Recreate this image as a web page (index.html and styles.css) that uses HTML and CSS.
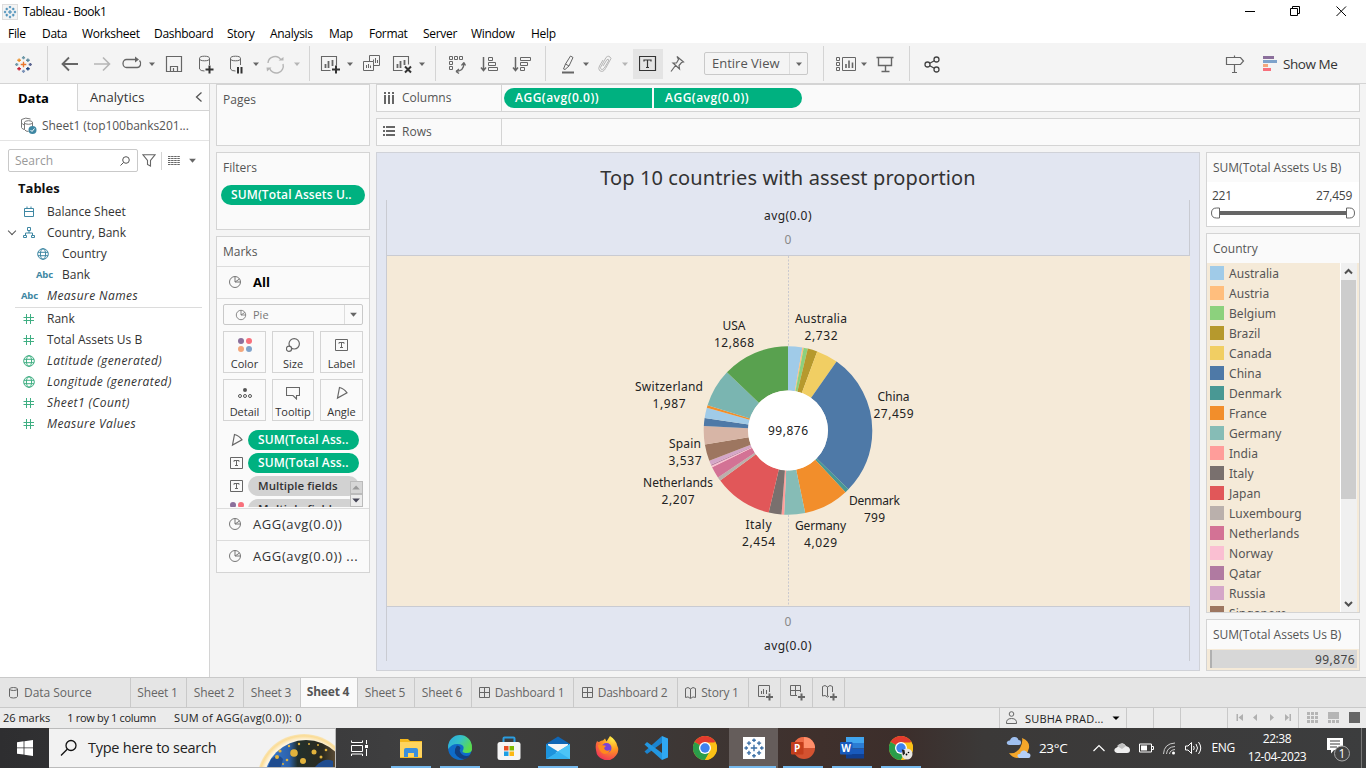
FILE: index.html
```html
<!DOCTYPE html>
<html lang="en">
<head>
<meta charset="utf-8">
<title>Tableau - Book1</title>
<link rel="stylesheet" href="styles.css">
</head>
<body>
<svg class="defs" width="0" height="0">
  <symbol id="globe" viewBox="0 0 12 12"><g fill="none" stroke="currentColor"><circle cx="6" cy="6" r="5.3"/><ellipse cx="6" cy="6" rx="2.6" ry="5.3"/><path d="M1 4.3h10M1 7.7h10"/></g></symbol>
  <symbol id="hash" viewBox="0 0 12 12"><path d="M3.500 1v10M7.500 1v10M.5 4.500h10.500M.5 7.500h10.500" fill="none" stroke="currentColor"/></symbol>
  <symbol id="pie" viewBox="0 0 14 14"><g fill="none" stroke="currentColor"><circle cx="7" cy="7" r="5.5"/><path d="M7 1.5v5.5l4.500-3M7 7h5.400"/></g></symbol>
  <symbol id="tbox" viewBox="0 0 14 14"><path d="M.5 1.500h12v11H.5zM4 5.800V4.500h5v1.300M6.500 4.500v5M5 9.500h3" fill="none" stroke="currentColor"/></symbol>
  <symbol id="angle" viewBox="0 0 14 14"><path d="M4.500 1.500L2.500 12l9.500-5.200Q9 2.500 4.500 1.500z" fill="none" stroke="currentColor" stroke-width="1.200"/></symbol>
  <symbol id="dots" viewBox="0 0 14 14"><circle cx="3" cy="3" r="3" fill="#8b6f9b"/><circle cx="11" cy="3" r="3" fill="#f8707c"/><circle cx="3" cy="11" r="3" fill="#f3a77c"/><circle cx="11" cy="11" r="3" fill="#7fa3cb"/></symbol>
  <symbol id="caret" viewBox="0 0 8 8"><path d="M1 2.500h6L4 6z" fill="currentColor"/></symbol>
  <symbol id="grid" viewBox="0 0 12 12"><path d="M.5.5h10v10H.5zM5.500.5v10M.5 5.500h10" fill="none" stroke="currentColor"/></symbol>
  <symbol id="book" viewBox="0 0 12 12"><path d="M.5 1.500l2.500-1 2.500 1.500L8 .5l2.500 1v9l-2.500-.6-2.500 1.600-2.500-1.600-2.500.6zM5.500 2v9" fill="none" stroke="currentColor"/></symbol>
  <symbol id="crosses" viewBox="0 0 24 24"><path d="M12 8.500v7M8.500 12h7"/><path class="c1" d="M12 1.500v4M10 3.500h4"/><path class="c2" d="M12 18.500v4M10 20.500h4"/><path class="c3" d="M1.500 12h4M3.500 10v4"/><path class="c4" d="M18.500 12h4M20.500 10v4"/><path class="c5" d="M6.500 4.500V9M4.200 6.700h4.600"/><path class="c6" d="M17.500 4.500V9M15.200 6.700h4.600"/><path class="c7" d="M6.500 15v4.500M4.200 17.300h4.600"/><path class="c8" d="M17.500 15v4.500M15.200 17.300h4.600"/></symbol>
  <symbol id="chrome" viewBox="0 0 24 24"><circle cx="12" cy="12" r="12" fill="#fbc116"/><path d="M12 12L1.600 6A12 12 0 0 1 22.400 6z" fill="#e33b2e"/><path d="M12 12L1.600 6A12 12 0 0 0 12 24l5.200-9z" fill="#2a9d4a"/><path d="M12 6.500h10.700A12 12 0 0 1 12 24l5-9z" fill="#fbc116"/><circle cx="12" cy="12" r="6" fill="#fff"/><circle cx="12" cy="12" r="4.700" fill="#3f82ee"/></symbol>
</svg>

<header class="titlebar">
  <svg class="app-logo" width="16" height="16" viewBox="0 0 24 24"><use href="#crosses"/></svg>
  <span class="app-title">Tableau - Book1</span>
  <svg class="win-btns" width="110" height="20" viewBox="0 0 110 20" fill="none" stroke="#000"><path d="M5 9.500h10"/><path d="M50.500 6.500h7v7h-7zM52.500 6V4.500h7v7H58"/><path d="M96.500 4.500l9.500 9.500M106 4.500L96.500 14"/></svg>
</header>
<nav class="menubar"><span>File</span><span>Data</span><span>Worksheet</span><span>Dashboard</span><span>Story</span><span>Analysis</span><span>Map</span><span>Format</span><span>Server</span><span>Window</span><span>Help</span></nav>

<div class="toolbar">
  <svg class="ic brand" viewBox="0 0 24 24"><g transform="translate(2.900 2.900) scale(.8)"><use href="#crosses" width="24" height="24"/></g></svg>
  <i class="sep"></i>
  <svg class="ic" viewBox="0 0 24 24"><path d="M20 12H5M11 5.500L4.500 12l6.500 6.500" stroke-width="1.800"/></svg>
  <svg class="ic off" viewBox="0 0 24 24"><path d="M4 12h15M13 5.500l6.500 6.500-6.500 6.500" stroke-width="1.600"/></svg>
  <svg class="ic" viewBox="0 0 24 24"><path d="M13 7.500H6.500a3.500 4 0 0 0 0 8H17a3.500 4 0 0 0 2.500-7M10 7.500h6" stroke-width="1.300"/><path d="M15 4.500v6l4-3z" fill="#666" stroke="none"/></svg>
  <svg class="caret"><use href="#caret"/></svg>
  <svg class="ic" viewBox="0 0 24 24"><path d="M4.500 4.500h15v15h-15zM8.500 19v-4.500h7V19M11.500 16v3" stroke-width="1.200"/></svg>
  <svg class="ic" viewBox="0 0 24 24"><path d="M5.500 6.500v10.500q1 2 5 2M15.500 6.500V13"/><ellipse cx="10.500" cy="6.500" rx="5" ry="2.300"/><path d="M15.500 13.500v8M11.500 17.500h8" stroke="#333" stroke-width="2"/></svg>
  <svg class="ic" viewBox="0 0 24 24"><path d="M6.500 6.500v10.500q1 2 5 2M16.500 6.500V13"/><ellipse cx="11.500" cy="6.500" rx="5" ry="2.300"/><path d="M14 15v6.500M17.500 15v6.500" stroke="#333" stroke-width="2"/></svg>
  <svg class="caret"><use href="#caret"/></svg>
  <svg class="ic off" viewBox="0 0 24 24"><path d="M5 11a7 7 0 0 1 13-3M20 12a7 7 0 0 1-13.500 4" stroke-width="1.400"/><path d="M15.500 8.500h5V5zM3.500 15.500h5L4 19.500z" fill="#b5b5b5" stroke="none"/></svg>
  <svg class="caret off"><use href="#caret"/></svg>
  <i class="sep"></i>
  <svg class="ic" viewBox="0 0 24 24"><path d="M12.500 18.500h-9v-14h15v9" stroke-width="1.100"/><path d="M7.500 12v4M10.500 9v7M14.500 8v6" stroke-width="1.800"/><path d="M18 13.500v8M14 17.500h8" stroke="#333" stroke-width="2"/></svg>
  <svg class="caret"><use href="#caret"/></svg>
  <svg class="ic" viewBox="0 0 24 24"><path d="M10.500 9.500V3.500h10v10h-6M4.500 9.500h10v9h-10zM7.500 13v3M9.500 12v4M11.500 13.500V16M14.500 7.500v2M16.500 6v5M18.500 8v3"/></svg>
  <svg class="ic" viewBox="0 0 24 24"><path d="M11.500 18.500h-9v-14h15v8" stroke-width="1.100"/><path d="M6.500 12v4M9.500 9v7M13.500 8v5" stroke-width="1.800"/><path d="M14 14.500l6 6M20 14.500l-6 6" stroke="#333" stroke-width="2"/></svg>
  <svg class="caret"><use href="#caret"/></svg>
  <i class="sep"></i>
  <svg class="ic" viewBox="0 0 24 24"><path d="M4.500 4.500h3v3h-3zM9.500 4.500h3v3h-3zM14.500 4.500h3v3h-3zM4.500 9.500h3v3h-3zM4.500 14.500h3v3h-3z"/><path d="M19 11q0 8-8 8.500M11 19.500l3-2.500M11 19.500l3 2M19 10.500l-2.500 3M19 10.500l1.500 3" stroke-width="1.300"/></svg>
  <svg class="ic" viewBox="0 0 24 24"><path d="M5.500 5v13M3 15.500l2.500 3 2.500-3" stroke-width="1.500"/><path d="M10.500 5.500h4v3h-4zM10.500 10.500h7v3h-7zM10.500 15.500h9v3h-9z"/></svg>
  <svg class="ic" viewBox="0 0 24 24"><path d="M5.500 5v13M3 15.500l2.500 3 2.500-3" stroke-width="1.500"/><path d="M10.500 5.500h10v3h-10zM10.500 10.500h7v3h-7zM10.500 15.500h4v3h-4z"/></svg>
  <i class="sep"></i>
  <svg class="ic" viewBox="0 0 24 24"><path d="M7.500 17l2-5 5-8 2.500 1.500-4 8.500-4 3.500zM9.500 12l3.500 2"/><path d="M6 20.500h12" stroke-width="2"/></svg>
  <svg class="caret"><use href="#caret"/></svg>
  <svg class="ic off" viewBox="0 0 24 24"><path d="M10 14l4-6.500q2-1 1.500 1.500L11 16.500q-3 2.500-3.500-1L13 5.500q3-3 5 1L12.500 16.500q-2.500 4.500-6 2-1.500-2 0-4.500L10 8"/></svg>
  <svg class="caret off"><use href="#caret"/></svg>
  <span class="t-btn"><svg width="18" height="16" viewBox="0 0 18 16"><path d="M.5.5h16v14H.5zM5 5.500V4h7v1.500M8.500 4v7.500M7 11.500h3" fill="none" stroke="#333" stroke-width="1.200"/></svg></span>
  <svg class="ic" viewBox="0 0 24 24"><path d="M12 4.500l6.500 5.500-2 .5-2.500 3 .5 3.500-6.500-6 3.500 0 2-3.500zM10.500 13.500L6 19.500" stroke-width="1.200"/></svg>
  <div class="fit"><span>Entire View</span><svg class="caret"><use href="#caret"/></svg></div>
  <i class="sep"></i>
  <svg class="ic" viewBox="0 0 24 24"><path d="M2.500 5.500h3v3h-3zM2.500 10.500h3v3h-3zM2.500 15.500h3v3h-3zM8.500 5.500h13v13h-13z"/><path d="M12 12v4M15 8.500V16M18.500 10.500V16" stroke-width="1.600"/></svg>
  <svg class="caret"><use href="#caret"/></svg>
  <svg class="ic" viewBox="0 0 24 24"><path d="M3.500 5.500h17M5.500 5.500v8h13v-8M12.500 13.500v6M8.500 19.500h8" stroke-width="1.400"/></svg>
  <i class="sep"></i>
  <svg class="ic dark" viewBox="0 0 24 24"><circle cx="7.500" cy="12.500" r="2.500"/><circle cx="16.500" cy="7.500" r="2.500"/><circle cx="16.500" cy="17.500" r="2.500"/><path d="M9.800 11.200l4.500-2.500M9.800 13.800l4.500 2.500" /></svg>
  <svg class="ic" viewBox="0 0 24 24"><path d="M3.500 5.500h14l3 3.500-3 3.500h-14zM11.500 3.500v2M11.500 12.500v8M9 20.500h5" stroke-width="1.200"/></svg>
  <div class="showme"><svg width="14" height="15"><path fill="#8b6f9b" d="M0 0h11v3H0z"/><path fill="#7fa3cb" d="M0 4h14v3H0z"/><path fill="#f3a77c" d="M0 8h5v3H0z"/><path fill="#f8707c" d="M0 12h8v3H0z"/></svg><span>Show Me</span></div>
</div>

<main class="work">
  <aside class="data-pane">
    <div class="pane-tabs"><b>Data</b><span>Analytics</span><svg width="8" height="10" viewBox="0 0 8 10"><path d="M6.500.5L1.500 5l5 4.500" fill="none" stroke="#555" stroke-width="1.300"/></svg></div>
    <div class="source"><svg width="18" height="18" viewBox="0 0 18 18" fill="none" stroke="#777"><path d="M1.500 2.500v8q1 2 3 2M1.500 2.500q4-2.500 9-.5M4.500 5.500v7q1 2 4 2M12.500 5.500v4M1.500 6q1 1.500 3 2"/><ellipse cx="8.500" cy="5.500" rx="4" ry="1.800"/><circle cx="12.500" cy="13" r="4" fill="#3e87a3" stroke="none"/><path d="M10.500 13l1.500 1.500 2.500-3" stroke="#fff"/></svg><span>Sheet1 (top100banks201...</span></div>
    <div class="search-row">
      <div class="search"><span>Search</span><svg width="10" height="10" viewBox="0 0 10 10"><circle cx="6" cy="4" r="3.300" fill="none" stroke="#555"/><path d="M3.500 6.500L.5 9.500" stroke="#555"/></svg></div>
      <svg class="funnel" width="14" height="13" viewBox="0 0 14 13"><path d="M.8.700h12.400L8.500 6.500v5.500l-3-1.500v-4z" fill="none" stroke="#666" stroke-width="1.100"/></svg>
      <i></i>
      <svg class="list" width="12" height="10" viewBox="0 0 12 10"><path d="M0 .5h12M0 2.500h12M0 4.500h12M0 6.500h12M0 8.500h12" stroke="#666" stroke-dasharray="2.500 .6"/></svg>
      <svg class="caret"><use href="#caret"/></svg>
    </div>
    <h2>Tables</h2>
    <ul class="fields blue">
      <li><svg class="fi" viewBox="0 0 12 12"><path d="M1.500 2.500h9v8h-9zM1.500 5.500h9M4 .5v2M8 .5v2" fill="none" stroke="currentColor"/></svg><span>Balance Sheet</span></li>
      <li class="open"><svg class="fi" viewBox="0 0 12 12"><path d="M4.500.5h3v3h-3zM6 3.500v2.500M2.500 8V6h7v2M.5 8.500h3v2h-3zM8.500 8.500h3v2h-3z" fill="none" stroke="currentColor"/></svg><span>Country, Bank</span></li>
      <li class="sub"><svg class="fi"><use href="#globe"/></svg><span>Country</span></li>
      <li class="sub"><em>Abc</em><span>Bank</span></li>
      <li class="gen"><em>Abc</em><span>Measure Names</span></li>
    </ul>
    <ul class="fields green">
      <li><svg class="fi"><use href="#hash"/></svg><span>Rank</span></li>
      <li><svg class="fi"><use href="#hash"/></svg><span>Total Assets Us B</span></li>
      <li class="gen"><svg class="fi"><use href="#globe"/></svg><span>Latitude (generated)</span></li>
      <li class="gen"><svg class="fi"><use href="#globe"/></svg><span>Longitude (generated)</span></li>
      <li class="gen"><svg class="fi"><use href="#hash"/></svg><span>Sheet1 (Count)</span></li>
      <li class="gen"><svg class="fi"><use href="#hash"/></svg><span>Measure Values</span></li>
    </ul>
  </aside>

  <section class="cards">
    <div class="card pages"><h3>Pages</h3></div>
    <div class="card filters"><h3>Filters</h3><span class="pill">SUM(Total Assets U..</span></div>
    <div class="card marks">
      <h3>Marks</h3>
      <div class="mark-row all"><svg width="14" height="14"><use href="#pie"/></svg><b>All</b></div>
      <div class="mark-body">
        <div class="mark-type"><svg width="12" height="12"><use href="#pie"/></svg><span>Pie</span><svg class="caret"><use href="#caret"/></svg></div>
        <div class="btns">
          <div><svg width="14" height="14"><use href="#dots"/></svg>Color</div>
          <div><svg width="14" height="14" viewBox="0 0 14 14"><g fill="none" stroke="#666" stroke-width="1.200"><circle cx="8.200" cy="5.800" r="5.200"/><circle cx="3" cy="10.800" r="2.600" fill="#fafafa"/></g></svg>Size</div>
          <div><svg width="14" height="14"><use href="#tbox"/></svg>Label</div>
          <div><svg width="14" height="14" viewBox="0 0 14 14"><circle cx="7" cy="4" r="2" fill="#555"/><g fill="none" stroke="#555"><circle cx="2" cy="10" r="1.500"/><circle cx="7" cy="10" r="1.500"/><circle cx="12" cy="10" r="1.500"/></g></svg>Detail</div>
          <div><svg width="14" height="14" viewBox="0 0 14 14"><path d="M.5 1.500h13v8h-3v3.500L7 9.500H.5z" fill="none" stroke="#666" stroke-width="1.100"/></svg>Tooltip</div>
          <div><svg width="14" height="14"><use href="#angle"/></svg>Angle</div>
        </div>
        <div class="shelf">
          <div><svg width="14" height="14"><use href="#angle"/></svg><span class="pill">SUM(Total Ass..</span></div>
          <div><svg width="14" height="14"><use href="#tbox"/></svg><span class="pill">SUM(Total Ass..</span></div>
          <div><svg width="14" height="14"><use href="#tbox"/></svg><span class="pill gray">Multiple fields</span></div>
          <div><svg width="14" height="14"><use href="#dots"/></svg><span class="pill gray">Multiple fields</span></div>
          <div class="spin"><svg width="13" height="13" viewBox="0 0 13 13"><path d="M1.500 9h9L6 4z" fill="#999"/></svg><svg width="13" height="13" viewBox="0 0 13 13"><path d="M1.500 4h9L6 9z" fill="#445"/></svg></div>
        </div>
      </div>
      <div class="mark-row"><svg width="14" height="14"><use href="#pie"/></svg><span>AGG(avg(0.0))</span></div>
      <div class="mark-row"><svg width="14" height="14"><use href="#pie"/></svg><span>AGG(avg(0.0)) ...</span></div>
    </div>
  </section>

  <section class="center">
    <div class="shelf-row"><div class="shelf-name"><svg width="12" height="12" viewBox="0 0 12 12"><path d="M2 0v2M6 0v2M10 0v2M2 3v9M6 3v9M10 3v9" stroke="#666" stroke-width="2"/></svg><span>Columns</span></div><span class="pill left">AGG(avg(0.0))</span><span class="pill right">AGG(avg(0.0))</span></div>
    <div class="shelf-row"><div class="shelf-name"><svg width="12" height="12" viewBox="0 0 12 12"><path d="M0 1h2M0 5h2M0 9h2M3 1h9M3 5h9M3 9h9" stroke="#666" stroke-width="2"/></svg><span>Rows</span></div></div>
    <div class="lower">
      <div class="viz">
        <h1>Top 10 countries with assest proportion</h1>
        <div class="plot">
          <div class="axis top"><b>avg(0.0)</b><span>0</span></div>
          <svg class="chart" width="803" height="350" viewBox="387 256 803 350">
            <path d="M788.500 256v350" stroke="#c9c9cf" stroke-dasharray="2 1.500"/>
            <g fill="none" stroke-width="44.400" transform="rotate(-90 788 430.500)">
              <circle class="slice" pathLength="360" stroke="#a0cbe8" stroke-dasharray="9.850 360"/>
              <circle class="slice" pathLength="360" stroke="#ffbe7d" stroke-dasharray="0.900 360" stroke-dashoffset="-9.850"/>
              <circle class="slice" pathLength="360" stroke="#8cd17d" stroke-dasharray="2.900 360" stroke-dashoffset="-10.750"/>
              <circle class="slice" pathLength="360" stroke="#b6992d" stroke-dasharray="6.650 360" stroke-dashoffset="-13.650"/>
              <circle class="slice" pathLength="360" stroke="#f1ce63" stroke-dasharray="14.900 360" stroke-dashoffset="-20.300"/>
              <circle class="slice" pathLength="360" stroke="#4e79a7" stroke-dasharray="99 360" stroke-dashoffset="-35.200"/>
              <circle class="slice" pathLength="360" stroke="#499894" stroke-dasharray="2.800 360" stroke-dashoffset="-134.200"/>
              <circle class="slice" pathLength="360" stroke="#f28e2b" stroke-dasharray="31.200 360" stroke-dashoffset="-137"/>
              <circle class="slice" pathLength="360" stroke="#86bcb6" stroke-dasharray="14.500 360" stroke-dashoffset="-168.200"/>
              <circle class="slice" pathLength="360" stroke="#ff9d9a" stroke-dasharray="1.800 360" stroke-dashoffset="-182.700"/>
              <circle class="slice" pathLength="360" stroke="#79706e" stroke-dasharray="8.800 360" stroke-dashoffset="-184.500"/>
              <circle class="slice" pathLength="360" stroke="#e15759" stroke-dasharray="40.200 360" stroke-dashoffset="-193.300"/>
              <circle class="slice" pathLength="360" stroke="#bab0ac" stroke-dasharray="2.700 360" stroke-dashoffset="-233.500"/>
              <circle class="slice" pathLength="360" stroke="#d37295" stroke-dasharray="7.950 360" stroke-dashoffset="-236.200"/>
              <circle class="slice" pathLength="360" stroke="#fabfd2" stroke-dasharray="1.100 360" stroke-dashoffset="-244.150"/>
              <circle class="slice" pathLength="360" stroke="#b07aa1" stroke-dasharray="0.800 360" stroke-dashoffset="-245.250"/>
              <circle class="slice" pathLength="360" stroke="#d4a6c8" stroke-dasharray="2.950 360" stroke-dashoffset="-246.050"/>
              <circle class="slice" pathLength="360" stroke="#9d7660" stroke-dasharray="11.400 360" stroke-dashoffset="-249"/>
              <circle class="slice" pathLength="360" stroke="#d7b5a6" stroke-dasharray="12.750 360" stroke-dashoffset="-260.400"/>
              <circle class="slice" pathLength="360" stroke="#4e79a7" stroke-dasharray="5.500 360" stroke-dashoffset="-273.150"/>
              <circle class="slice" pathLength="360" stroke="#a0cbe8" stroke-dasharray="7.100 360" stroke-dashoffset="-278.650"/>
              <circle class="slice" pathLength="360" stroke="#f28e2b" stroke-dasharray="1.700 360" stroke-dashoffset="-285.750"/>
              <circle class="slice" pathLength="360" stroke="#7ab5b1" stroke-dasharray="26.150 360" stroke-dashoffset="-287.450"/>
              <circle class="slice" pathLength="360" stroke="#59a14f" stroke-dasharray="46.400 360" stroke-dashoffset="-313.600"/>
            </g>
            <circle cx="788" cy="430.500" r="40" fill="#fff"/>
            <g class="labels">
              <text x="788" y="435" textLength="40">99,876</text>
              <text x="821" y="323" textLength="52">Australia</text><text x="821" y="340" textLength="33">2,732</text>
              <text x="734" y="330" textLength="23">USA</text><text x="734" y="347" textLength="40">12,868</text>
              <text x="669" y="391" textLength="68">Switzerland</text><text x="669" y="408" textLength="33">1,987</text>
              <text x="685" y="448" textLength="32">Spain</text><text x="685" y="465" textLength="33">3,537</text>
              <text x="678" y="487" textLength="70">Netherlands</text><text x="678" y="504" textLength="33">2,207</text>
              <text x="758.500" y="529" textLength="26">Italy</text><text x="758.500" y="546" textLength="33">2,454</text>
              <text x="820.500" y="530" textLength="51">Germany</text><text x="820.500" y="547" textLength="33">4,029</text>
              <text x="874.500" y="505" textLength="51">Denmark</text><text x="874.500" y="522" textLength="21">799</text>
              <text x="893.500" y="401" textLength="32">China</text><text x="893.500" y="418" textLength="40">27,459</text>
            </g>
          </svg>
          <div class="axis bottom"><span>0</span><b>avg(0.0)</b></div>
        </div>
      </div>
      <aside class="legends">
        <div class="card range"><h3>SUM(Total Assets Us B)</h3><div class="ends"><span>221</span><span>27,459</span></div>
          <svg width="146" height="12" viewBox="0 0 146 12"><path d="M9 6h128" stroke="#666" stroke-width="4"/><path d="M9.500 1v10h-3q-5 0-5-5t5-5zM136.500 1v10h3q5 0 5-5t-5-5z" fill="#fff" stroke="#666"/></svg></div>
        <div class="card country"><h3>Country</h3>
          <div class="country-body">
            <ul>
              <li class="k1">Australia</li><li class="k2">Austria</li><li class="k3">Belgium</li><li class="k4">Brazil</li><li class="k5">Canada</li><li class="k6">China</li><li class="k7">Denmark</li><li class="k8">France</li><li class="k9">Germany</li><li class="k10">India</li><li class="k11">Italy</li><li class="k12">Japan</li><li class="k13">Luxembourg</li><li class="k14">Netherlands</li><li class="k15">Norway</li><li class="k16">Qatar</li><li class="k17">Russia</li><li class="k18">Singapore</li>
            </ul>
            <div class="scroll"><svg width="15" height="17" viewBox="0 0 15 17"><path d="M4 10.500L7.500 7l3.500 3.500" fill="none" stroke="#505050" stroke-width="2"/></svg><i></i><svg width="15" height="17" viewBox="0 0 15 17"><path d="M4 7l3.500 3.500L11 7" fill="none" stroke="#505050" stroke-width="2"/></svg></div>
          </div>
        </div>
        <div class="card total"><h3>SUM(Total Assets Us B)</h3><div class="total-body"><span>99,876</span></div></div>
      </aside>
    </div>
  </section>
</main>

<nav class="sheets">
  <span class="ds"><svg width="10" height="12" viewBox="0 0 10 12"><path d="M.5 2v7.500q.5 1.500 4 1.500t4-1.500V2" fill="none" stroke="#666"/><ellipse cx="4.500" cy="2" rx="4" ry="1.500" fill="none" stroke="#666"/></svg>Data Source</span>
  <span>Sheet 1</span><span>Sheet 2</span><span>Sheet 3</span><span class="on">Sheet 4</span><span>Sheet 5</span><span>Sheet 6</span>
  <span><svg width="12" height="12"><use href="#grid"/></svg>Dashboard 1</span>
  <span><svg width="12" height="12"><use href="#grid"/></svg>Dashboard 2</span>
  <span><svg width="12" height="12"><use href="#book"/></svg>Story 1</span>
  <span class="add"><svg viewBox="0 0 16 16"><path d="M7 11.500H.5V.5h11V7M3.500 6v3M5.500 4v5M8.500 5v4"/><path d="M11.500 8.500v7M8 12h7" stroke-width="2"/></svg></span>
  <span class="add"><svg viewBox="0 0 16 16"><path d="M7 10.500H.5V.5h10V7M5.500.5v10M.5 5.500h10"/><path d="M11.500 8.500v7M8 12h7" stroke-width="2"/></svg></span>
  <span class="add"><svg viewBox="0 0 16 16"><path d="M7 11L5.500 12 3 10.500l-2.500.5V1.500l2.500-1L5.500 2 8 .5l2.500 1V7M5.500 2v9"/><path d="M11.500 8.500v7M8 12h7" stroke-width="2"/></svg></span>
</nav>
<footer class="status">
  <span>26 marks</span><span class="rows">1 row by 1 column</span><span class="sum">SUM of AGG(avg(0.0)): 0</span>
  <div class="user"><svg width="11" height="14" viewBox="0 0 11 14"><circle cx="5.500" cy="3" r="2.300" fill="none" stroke="#666"/><path d="M.5 12.500q-.5-5 5-5t5 5z" fill="none" stroke="#666"/></svg><span>SUBHA PRAD...</span><svg class="caret" viewBox="0 0 8 8"><path d="M.5 2.500h7L4 6z" fill="#000"/></svg></div>
  <i></i><i></i><i></i>
  <div class="pager"><svg width="60" height="8" viewBox="0 0 60 8" fill="#b0b0b0"><path d="M.5 0H2v7H.5zM7 0v7L2.500 3.500zM21 0v7l-4-3.500zM34 0v7l4-3.500zM49 0v7l4-3.500zM53.500 0H55v7h-1.500z"/></svg></div>
  <div class="views"><svg width="54" height="11" viewBox="0 0 54 11"><path fill="#b5b5b5" d="M0 0h3v3H0zM4 0h3v3H4zM8 0h3v3H8zM0 4h3v3H0zM4 4h3v3H4zM8 4h3v3H8zM0 8h3v3H0zM4 8h3v3H4zM8 8h3v3H8zM21 0h11v7H21zM21 8h3v3h-3zM25 8h3v3h-3zM29 8h3v3h-3z"/><path fill="#666" d="M42 0h11v11H42z"/></svg></div>
</footer>

<footer class="taskbar">
  <div class="tb start"><svg width="16" height="16" viewBox="0 0 16 16"><path fill="#fff" d="M0 2.200l6.600-.9v6.200H0zM7.400 1.200L16 0v7.500H7.400zM0 8.300h6.600v6.300L0 13.700zM7.400 8.300H16V16l-8.600-1.200z"/></svg></div>
  <div class="tsearch"><svg class="mag" width="18" height="18" viewBox="0 0 18 18"><circle cx="11" cy="6.500" r="5" fill="none" stroke="#111" stroke-width="1.300"/><path d="M7.200 10.200L1 16.500" stroke="#111" stroke-width="1.300"/></svg><span>Type here to search</span>
    <svg class="earth" width="76" height="38" viewBox="0 0 76 38"><defs><radialGradient id="halo" cx="45" cy="52" r="47" gradientUnits="userSpaceOnUse"><stop offset=".88" stop-color="#fdf3dc"/><stop offset=".96" stop-color="#fbdc95"/><stop offset="1" stop-color="#f8e5b8"/></radialGradient><linearGradient id="sea" x1="0" y1="0" x2="1" y2="0"><stop offset="0" stop-color="#3a80d8"/><stop offset=".3" stop-color="#2c62ac"/><stop offset=".4" stop-color="#22302c"/><stop offset=".7" stop-color="#2c2b20"/><stop offset="1" stop-color="#8a6b48"/></linearGradient></defs><circle cx="45" cy="52" r="47" fill="url(#halo)"/><circle cx="47" cy="53" r="42" fill="url(#sea)"/><path d="M58 36q8-8 16-4v6H56zM12 30q8-6 12 0l-2 8H9z" fill="#1f4c8f"/><g fill="#e2b33c"><circle cx="35" cy="24" r="3.800"/><circle cx="44" cy="32" r="3"/><circle cx="55" cy="23" r="2.500"/><circle cx="21" cy="22" r="1.600"/><circle cx="18" cy="28" r="2"/><circle cx="62" cy="28" r="1.500"/><circle cx="28" cy="31" r="1.300"/><circle cx="40" cy="15" r="1.200"/><circle cx="50" cy="15" r="1"/><circle cx="30" cy="17" r="1.200"/><circle cx="67" cy="21" r="1.300"/><circle cx="24" cy="35" r="1"/><circle cx="59" cy="16" r="1"/></g></svg></div>
  <div class="tb view"><svg width="18" height="16" viewBox="0 0 18 16" fill="none" stroke="#fff"><path d="M1.500.5v2h11v-2M1.500 5.500h11v6h-11zM1.500 16v-2h11v2M16.500 0v4M16.500 9v7"/><path d="M15 6.500h3" stroke-width="3"/></svg></div>
  <div class="tb run"><svg width="24" height="24" viewBox="0 0 24 24"><path d="M1 3h8l2 2h12v17H1z" fill="#f5b81c"/><path d="M1 6h22v15H1z" fill="#ffd45e"/><path d="M5 21v-7q0-2 2-2h10q2 0 2 2v7h-4v-4H9v4z" fill="#3a8edb"/></svg></div>
  <div class="tb run"><svg width="26" height="26" viewBox="0 0 24 24"><defs><linearGradient id="eg" x1="0" y1="0" x2="1" y2=".5"><stop offset="0" stop-color="#2aa7e0"/><stop offset=".5" stop-color="#35c1c9"/><stop offset="1" stop-color="#5bdc4b"/></linearGradient></defs><circle cx="12" cy="12" r="11" fill="#0f6cc9"/><path d="M1 11A11 11 0 0 1 23 11q1 6-6 5.500-4-.5-2-3 1.500-4-3-5Q5 7 1 13z" fill="url(#eg)"/><path d="M9 10q-5 7 3 11.500 6 2 9.500-3-5 2-8-1-3-3-1-5.500-1-2.500-3.500-2z" fill="#123f80"/></svg></div>
  <div class="tb"><svg width="24" height="24" viewBox="0 0 24 24"><path d="M6.500 7V2.500q0-1 1-1h9q1 0 1 1V7" fill="none" stroke="#2b9de0" stroke-width="2"/><rect x=".5" y="6" width="23" height="18" rx="2.500" fill="#f5f5f5"/><path fill="#e74f25" d="M7 10h4.500v4.500H7z"/><path fill="#7eb800" d="M12.500 10H17v4.500h-4.500z"/><path fill="#1d9fe4" d="M7 15.500h4.500V20H7z"/><path fill="#fcb813" d="M12.500 15.500H17V20h-4.500z"/></svg></div>
  <div class="tb run"><svg width="24" height="24" viewBox="0 0 24 24"><path d="M0 8l12-7.500L24 8v15H0z" fill="#1066b5"/><path d="M2 8h20v9H2z" fill="#f6f6f6"/><path d="M0 8l12 7.500L0 23z" fill="#1d93dc"/><path d="M24 8v15H0l12-7.500z" fill="#35b2f0"/><path d="M24 8v15L12 15.500z" fill="#4cc4f7"/></svg></div>
  <div class="tb"><svg width="24" height="24" viewBox="0 0 24 24"><defs><radialGradient id="ff" cx=".75" cy=".1" r="1"><stop offset="0" stop-color="#fff04a"/><stop offset=".45" stop-color="#ff9a1f"/><stop offset="1" stop-color="#f0305a"/></radialGradient></defs><path d="M2 5q1 1 2 1 2-2 4-1.500l2-2 1.500 3 3.500-5.500q6 4 7 9 3 6-1 10.500A11 11 0 0 1 1 14Q0 9 2 5z" fill="url(#ff)"/><circle cx="11.500" cy="12" r="5" fill="#7a42d6"/><path d="M3 9q6 0 8 1l-2 2q1 4 6 2-2 5-7 3.500-4-2-5-8.500z" fill="#ff8a1c"/></svg></div>
  <div class="tb"><svg width="24" height="24" viewBox="0 0 24 24"><path d="M18 0v7L3 18 .5 15.500z" fill="#1b84cf"/><path d="M18 24v-7L3 6 .5 8.500z" fill="#2397e0"/><path d="M18 0l6 2.500v19L18 24z" fill="#2fa8f2"/></svg></div>
  <div class="tb"><svg width="24" height="24"><use href="#chrome"/></svg></div>
  <div class="tb run active"><svg class="tab-ic" width="22" height="22" viewBox="0 0 24 24"><use href="#crosses"/></svg></div>
  <div class="tb run"><svg width="24" height="24" viewBox="0 0 24 24"><circle cx="13" cy="12" r="11" fill="#d35230"/><path d="M13 1a11 11 0 0 1 11 11H13z" fill="#ff8f6b"/><path d="M2 12A11 11 0 0 1 13 1v11z" fill="#ed6c47"/><rect y="6" width="12.500" height="12.500" rx="1" fill="#c43e1c"/><text x="6.200" y="16" class="glyph">P</text></svg></div>
  <div class="tb run"><svg width="24" height="24" viewBox="0 0 24 24"><path fill="#41a5ee" d="M6 1h18v6H6z"/><path fill="#2b7cd3" d="M6 7h18v5.500H6z"/><path fill="#185abd" d="M6 12.500h18V18H6z"/><path fill="#103f91" d="M6 18h18v4.500H6z"/><rect y="6" width="12.500" height="12.500" rx="1" fill="#185abd"/><text x="6.200" y="16" class="glyph">W</text></svg></div>
  <div class="tb run"><svg width="24" height="24" viewBox="0 0 24 24"><use href="#chrome"/><circle cx="18" cy="18" r="5.500" fill="#e8e5e0"/><path d="M12.800 13.500l2.700.5.500 3.500-2 2z" fill="#1c1c1c"/><circle cx="19.500" cy="16.500" r=".8"/><circle cx="17.500" cy="18.500" r=".9"/></svg></div>
  <div class="tray">
    <svg width="26" height="24" viewBox="0 0 26 24"><path d="M16 2q8 3 7 10-2 10-12 10-5-.5-8-5 7 1 11-5 3-5 2-10z" fill="#f4a62a"/><path d="M3 9q-3-1-2-3 1-2 3-1.500Q5 .5 9 1q3 .5 3.500 3 3 0 2.500 3 0 2-2 2z" fill="#9fbfee"/><path d="M13 22q-2-1-1.500-3 1-1.500 2.500-1 1-4 4.500-3.500 2.500.5 3 2.500 3 0 3 2.500 0 2.500-2 2.500z" fill="#b4cff8"/></svg>
    <span class="temp">23°C</span>
    <svg width="12" height="8" viewBox="0 0 12 8"><path d="M.5 7L6 1.500 11.500 7" fill="none" stroke="#fff" stroke-width="1.200"/></svg>
    <svg width="16" height="12" viewBox="0 0 16 12"><path d="M3 11q-4-1-2-4.500Q4 5 5 3q4-4 7 1 4 1 4 4 0 3-3 3z" fill="#eee"/><path d="M3 4q4-5 9 0l-4 3z" fill="#c2c2c2"/></svg>
    <svg width="15" height="10" viewBox="0 0 15 10"><path d="M.5 1h12v8H.5zM13 3.500h1.500v3H13" fill="none" stroke="#fff"/><path d="M2 2.500h6v5H2z" fill="#fff"/></svg>
    <svg width="13" height="13" viewBox="0 0 13 13"><g fill="none" stroke="#ccc"><path d="M.5 12Q1 1.500 12 1M3.500 12Q4 5 12 4.500M6.500 12q.5-4 5.500-4.500"/></g><circle cx="10.500" cy="11" r="1.500" fill="#fff"/></svg>
    <svg width="17" height="14" viewBox="0 0 17 14" fill="none" stroke="#fff"><path d="M.5 5h2.500l3.500-3.500v11L3 9H.5zM8.500 5q1.500 2 0 4M11 3q3 4 0 8M13.500 1q4.500 6 0 12"/></svg>
    <span class="lang">ENG</span>
    <div class="clock"><span>22:38</span><span>12-04-2023</span></div>
    <svg width="26" height="28" viewBox="0 0 26 28"><path d="M1 4h16v12H8l-3 3.500V16H1z" fill="#fff"/><path d="M4 7h10M4 10h10M4 13h7" stroke="#3a3a3b"/><circle cx="16" cy="19.500" r="7.500" fill="#444" stroke="#aaa"/><text x="16" y="24" class="glyph n">1</text></svg>
    <i></i>
  </div>
</footer>
</body>
</html>
```
FILE: styles.css
```css
* { box-sizing: border-box; }
body { margin: 0; width: 1366px; height: 768px; overflow: hidden; background: #f4f4f4; font: 12px/16px "Open Sans", "Noto Sans", sans-serif; color: #333; display: flex; flex-direction: column; }
h1, h2, h3, ul { margin: 0; padding: 0; font-weight: 400; list-style: none; }
svg { flex: none; display: block; }
.defs { position: absolute; }
.caret { width: 8px; height: 8px; color: #666; }
span { white-space: nowrap; }

.titlebar { height: 23px; background: #fff; display: flex; align-items: center; padding-left: 2px; flex: none; }
.app-logo { stroke: #3b86b4; stroke-width: 1.8; background: #f4f4f4; border: 1px solid #ddd; }
.app-title { margin-left: 5px; color: #000; flex: 1; font-size: 12px; letter-spacing: -.43px; }
.win-btns { margin-right: 16px; }
.menubar { height: 20px; flex: none; background: #fff; color: #000; padding-left: 8px; display: grid; grid-template-columns: 34px 40px 72px 73px 43px 59px 40px 54px 48px 60px auto; line-height: 22px; justify-content: start; letter-spacing: -.3px; }

.toolbar { height: 41px; flex: none; padding: 1px 0 0 11px; display: grid; align-items: center; grid-template-columns: 36px 11px 32px 30px 28px 14px 32px 30px 28px 11px 30px 16px 9px 28px 13px 32px 27px 17px 10px 33px 32px 35px 11px 26px 11px 28px 12px 32px 39px 119px 11px 26px 13px 36px 11px 303px 40px 1fr; border-bottom: 1px solid #d4d4d4; }
.ic { width: 24px; height: 24px; fill: none; stroke: #666; }
.ic.off { stroke: #b5b5b5; }
.ic.dark { stroke: #444; stroke-width: 1.3; }
.caret.off { color: #b5b5b5; }
.brand { stroke: #e8762c; stroke-width: 1.7; --c1: #6f99a8; --c2: #7c93b8; --c3: #6f99a8; --c4: #5b6591; --c5: #eb912b; --c6: #5b879b; --c7: #c72035; --c8: #1f447e; }
.c1 { stroke: var(--c1); } .c2 { stroke: var(--c2); } .c3 { stroke: var(--c3); } .c4 { stroke: var(--c4); } .c5 { stroke: var(--c5); } .c6 { stroke: var(--c6); } .c7 { stroke: var(--c7); } .c8 { stroke: var(--c8); }
.sep { width: 1px; height: 35px; background: #d4d4d4; }
.t-btn { width: 30px; height: 30px; background: #e4e4e4; display: grid; place-content: center; }
.fit { width: 104px; height: 23px; border: 1px solid #c9c9c9; border-radius: 2px; display: flex; align-items: center; font-size: 13px; color: #555; }
.fit span { width: 85px; padding-left: 7px; border-right: 1px solid #ddd; line-height: 21px; }
.fit .caret { margin-left: 5px; }
.showme { display: flex; align-items: center; gap: 6px; font-size: 13.5px; letter-spacing: -.45px; }

.work { flex: 1; display: flex; min-height: 0; }
.data-pane { width: 210px; background: #fff; border-right: 1px solid #d4d4d4; }
.pane-tabs { height: 27px; display: flex; align-items: center; color: #333; font-size: 13px; }
.pane-tabs b { width: 77px; padding-left: 18px; color: #000; }
.pane-tabs span { flex: 1; align-self: stretch; line-height: 27px; padding-left: 12px; letter-spacing: .1px; background: #fafafa; border-left: 1px solid #d4d4d4; border-bottom: 1px solid #d4d4d4; }
.pane-tabs svg { margin: 0 6px 2px -14px; }
.source { height: 30px; border-bottom: 1px solid #e4e4e4; display: flex; align-items: center; gap: 4px; padding-left: 20px; color: #555; letter-spacing: -.05px; }
.search-row { display: flex; align-items: center; height: 23px; margin: 8px 0 0 8px; }
.search { width: 130px; height: 23px; border: 1px solid #c9c9c9; border-radius: 2px; display: flex; align-items: center; justify-content: space-between; padding: 0 7px 0 6px; color: #999; }
.funnel { margin-left: 4px; }
.search-row i { width: 1px; height: 18px; background: #d4d4d4; margin: 0 6px 0 5px; }
.search-row .caret { margin-left: 8px; width: 9px; height: 9px; }
.data-pane h2 { font-weight: 700; font-size: 13px; color: #111; margin: 8px 0 5px 18px; line-height: 16px; }
.fields li { height: 21px; display: flex; align-items: center; position: relative; }
.fi { width: 12px; height: 12px; margin: 0 12px 0 23px; }
.fields em { width: 18px; margin: 0 8px 0 21px; font: 700 9.5px/12px "Open Sans", sans-serif; letter-spacing: -.2px; }
.blue svg, .blue em { color: #3e87a3; }
.green svg { color: #3fae82; }
.sub .fi { margin-left: 37px; margin-right: 13px; }
.sub em { margin-left: 36px; }
.gen span { font-style: italic; letter-spacing: .42px; }
.open::before { content: ""; position: absolute; left: 9px; top: 6px; width: 5px; height: 5px; border: solid #555; border-width: 0 1px 1px 0; transform: rotate(45deg); }
.green { border-top: 1px solid #dcdcdc; margin: 1px 7px 0 15px; }
.green .fi { margin-left: 8px; }

.card { background: #fafafa; border: 1px solid #d4d4d4; }
.card h3 { font-size: 12px; line-height: 16px; padding: 7px 0 7px 6px; color: #555; white-space: nowrap; }
.pill { background: #00b180; color: #fff; border-radius: 10px; height: 20px; line-height: 20px; font-weight: 600; display: block; font-size: 12px; letter-spacing: .12px; }
.pill.gray { background: #d2d2d2; color: #333; font-size: 11.5px; letter-spacing: .05px; }
.cards { width: 154px; margin-left: 6px; display: flex; flex-direction: column; gap: 6px; }
.pages { height: 62px; }
.filters { height: 78px; }
.filters .pill { width: 144px; margin: 2px 0 0 4px; padding-left: 10px; }
.marks { height: 337px; display: flex; flex-direction: column; }
.marks h3 { height: 29px; flex: none; }
.mark-row { height: 32px; flex: none; border-top: 1px solid #dcdcdc; display: flex; align-items: center; gap: 11px; padding: 0 0 2px 11px; color: #777; font-size: 13px; }
.mark-row b, .mark-row span { color: #333; }
.mark-row span { letter-spacing: .6px; }
.mark-row b { color: #000; }
.mark-body { border-top: 1px solid #dcdcdc; height: 210px; padding: 5px 6px 0; }
.mark-type { height: 21px; border: 1px solid #c9c9c9; border-radius: 2px; display: flex; align-items: center; color: #777; padding-left: 11px; }
.mark-type span { flex: 1; margin-left: 6px; border-right: 1px solid #ddd; line-height: 19px; font-size: 11px; }
.mark-type .caret { margin: 0 4px; width: 9px; height: 9px; }
.btns { display: grid; grid-template-columns: 43px 42px 43px; gap: 6px; margin-top: 6px; }
.btns div { height: 42px; border: 1px solid #d4d4d4; display: flex; flex-direction: column; align-items: center; padding: 6px 0 0 0; gap: 5px; font-size: 11px; line-height: 14px; color: #333; }
.btns svg, .shelf svg { color: #666; }
.shelf { height: 86px; overflow: hidden; padding-top: 9px; position: relative; }
.shelf > div { display: flex; align-items: center; height: 20px; margin-bottom: 3px; padding-left: 7px; gap: 4px; }
.shelf .pill { width: 111px; padding-left: 10px; }
.shelf .spin { position: absolute; right: 0; top: 60px; width: 13px; height: 26px; padding: 0; margin: 0; display: block; }
.spin svg { background: #d6d6d6; border: 1px solid #bbb; }
.spin svg + svg { background: #ececec; }

.center { flex: 1; margin-left: 6px; display: flex; flex-direction: column; }
.shelf-row { height: 28px; flex: none; width: 984px; border: 1px solid #d4d4d4; background: #fafafa; margin-bottom: 6px; display: flex; align-items: center; }
.shelf-name { width: 125px; height: 26px; border-right: 1px solid #d4d4d4; display: flex; align-items: center; gap: 7px; padding-left: 6px; color: #555; }
.shelf-row .pill { letter-spacing: .5px; }
.pill.left { margin-left: 2px; width: 148px; border-radius: 10px 0 0 10px; padding-left: 11px; }
.pill.right { margin-left: 2px; width: 148px; border-radius: 0 10px 10px 0; padding-left: 11px; }
.lower { display: flex; gap: 6px; height: 519px; }
.viz { width: 824px; background: #e2e6f1; border: 1px solid #d0d2d8; }
.viz h1 { text-align: center; font: 20px/28px "Noto Sans", sans-serif; letter-spacing: .1px; color: #333; margin-top: 11px; }
.plot { margin: 8px 9px 0; height: 461px; border-left: 1px solid #c9cbd2; border-right: 1px solid #c9cbd2; display: flex; flex-direction: column; }
.axis { height: 56px; display: flex; flex-direction: column; align-items: center; font: 12px/16px "Noto Sans", sans-serif; color: #888; gap: 8px; }
.axis b { font-weight: 400; color: #222; letter-spacing: .45px; }
.axis.top { padding-top: 8px; border-bottom: 1px solid #c9cbd2; }
.axis.bottom { padding-top: 7px; border-top: 1px solid #c9cbd2; flex: 1; }
.chart { background: #f5ead8; }
.slice { cx: 788px; cy: 430.5px; r: 62.1px; }
.labels text { font: 12px "Noto Sans", sans-serif; fill: #222; text-anchor: middle; }
.legends { width: 154px; display: flex; flex-direction: column; gap: 6px; }
.legends .card h3 { height: 29px; background: #fafafa; }
.range { height: 75px; background: #fff; }
.ends { display: flex; justify-content: space-between; padding: 6px 7px 0 5px; line-height: 16px; font-size: 12px; letter-spacing: -.25px; color: #444; }
.range svg { margin: 3px 0 0 3px; }
.country { height: 380px; overflow: hidden; }
.country-body { display: flex; background: #f5ead8; height: 349px; }
.country ul { width: 133px; padding: 0 0 0 3px; overflow: hidden; font: 12px/20px "Noto Sans", sans-serif; color: #555; letter-spacing: .05px; }
.country li { height: 20px; display: flex; align-items: center; gap: 5px; padding-top: 1px; }
.country li::before { content: ""; width: 14px; height: 14px; margin-top: -1px; }
.k1::before { background: #a0cbe8; } .k2::before { background: #ffbe7d; } .k3::before { background: #8cd17d; } .k4::before { background: #b6992d; } .k5::before { background: #f1ce63; } .k6::before { background: #4e79a7; } .k7::before { background: #499894; } .k8::before { background: #f28e2b; } .k9::before { background: #86bcb6; } .k10::before { background: #ff9d9a; } .k11::before { background: #79706e; } .k12::before { background: #e15759; } .k13::before { background: #bab0ac; } .k14::before { background: #d37295; } .k15::before { background: #fabfd2; } .k16::before { background: #b07aa1; } .k17::before { background: #d4a6c8; } .k18::before { background: #9d7660; }
.scroll { width: 17px; background: #f0f0f0; border-left: 1px solid #fff; display: flex; flex-direction: column; justify-content: space-between; }
.scroll i { width: 15px; height: 219px; background: #cdcdcd; margin-bottom: auto; }
.total { height: 52px; }
.total-body { background: #f5ead8; height: 21px; padding: 1px 2px 1px 3px; }
.total-body span { display: block; height: 18px; line-height: 19px; background: #d7d7d7; border-left: 2px solid #b0b0b0; text-align: right; padding-right: 2px; color: #444; font-family: "Noto Sans", sans-serif; letter-spacing: .4px; }

.sheets { height: 31px; flex: none; background: #e5e5e5; border-top: 1px solid #c9c9c9; border-bottom: 1px solid #c9c9c9; display: grid; grid-template-columns: 131px 56px 57px 57px 57px 57px 57px 102px 104px 71px 32px 32px 32px; color: #666; letter-spacing: -.2px; }
.sheets span { border-right: 1px solid #c9c9c9; display: flex; align-items: center; justify-content: center; gap: 4px; padding-right: 2px; }
.sheets .ds { justify-content: flex-start; padding-left: 9px; gap: 5px; letter-spacing: -.03px; }
.sheets .on { background: #fafafa; font-weight: 700; color: #555; padding-bottom: 2px; }
.add svg { width: 16px; height: 16px; fill: none; stroke: #666; margin-left: 4px; }
.status { height: 20px; flex: none; background: #ebebeb; display: flex; align-items: stretch; line-height: 19px; font-size: 11px; color: #222; padding-left: 3px; gap: 18px; }
.rows { letter-spacing: -.32px; margin-left: -1px; }
.sum { letter-spacing: .3px; }
.user { margin-left: auto; width: 127px; border-left: 1px solid #c9c9c9; display: flex; align-items: center; padding-left: 6px; gap: 8px; letter-spacing: .2px; }
.status i { width: 27px; border-left: 1px solid #c9c9c9; margin-left: -18px; }
.status i:last-of-type { width: 47px; }
.pager { width: 71px; margin-left: -18px; border-left: 1px solid #c9c9c9; padding: 6px 0 0 8px; }
.views { width: 68px; margin-left: -18px; border-left: 1px solid #c9c9c9; padding: 4px 0 0 8px; }

.taskbar { height: 40px; flex: none; display: flex; background: linear-gradient(90deg, #2e2e30 0, #3f3f40 30%, #3c3a39 45%, #3f302c 60%, #3c2e2b 66%, #3b3938 72%, #3c3d3e 100%); color: #fff; }
.tb { width: 49px; display: grid; place-content: center; position: relative; }
.start { width: 49px; }
.tsearch { width: 287px; background: #f2f2f2; border: 1px solid #bbb; border-left: 0; display: flex; align-items: center; color: #222; font-size: 14.5px; padding-left: 11px; }
.tsearch span { flex: 1; margin-left: 10px; letter-spacing: -.27px; }
.view { width: 49px; margin-right: 1px; }
.view svg { margin-right: 3px; }
.run::after { content: ""; position: absolute; left: 5px; right: 4px; bottom: 0; height: 2px; background: #76b9ed; }
.active { background: #655d5b; }
.active::after { left: 0; right: 2px; }
.tab-ic { background: #fff; stroke: #3b6fa5; stroke-width: 1.5; }
.glyph { font: 700 10px "Open Sans", sans-serif; fill: #fff; text-anchor: middle; }
.glyph.n { font-size: 12px; font-weight: 400; }
.tray { margin-left: auto; display: flex; align-items: center; }
.tray svg:nth-of-type(n+2) { margin-right: 9px; }
.temp { font-size: 13.5px; margin: 0 26px 0 7px; letter-spacing: -.3px; }
.lang { margin: 0 13px 0 0; letter-spacing: -.3px; }
.clock { width: 58px; display: flex; flex-direction: column; align-items: center; line-height: 18px; letter-spacing: -.4px; }
.tray .clock { margin-right: 20px; }
.tray svg:last-of-type { margin-right: 9px; }
.tray i { width: 1px; height: 40px; background: #777; margin-right: 4px; }
```
